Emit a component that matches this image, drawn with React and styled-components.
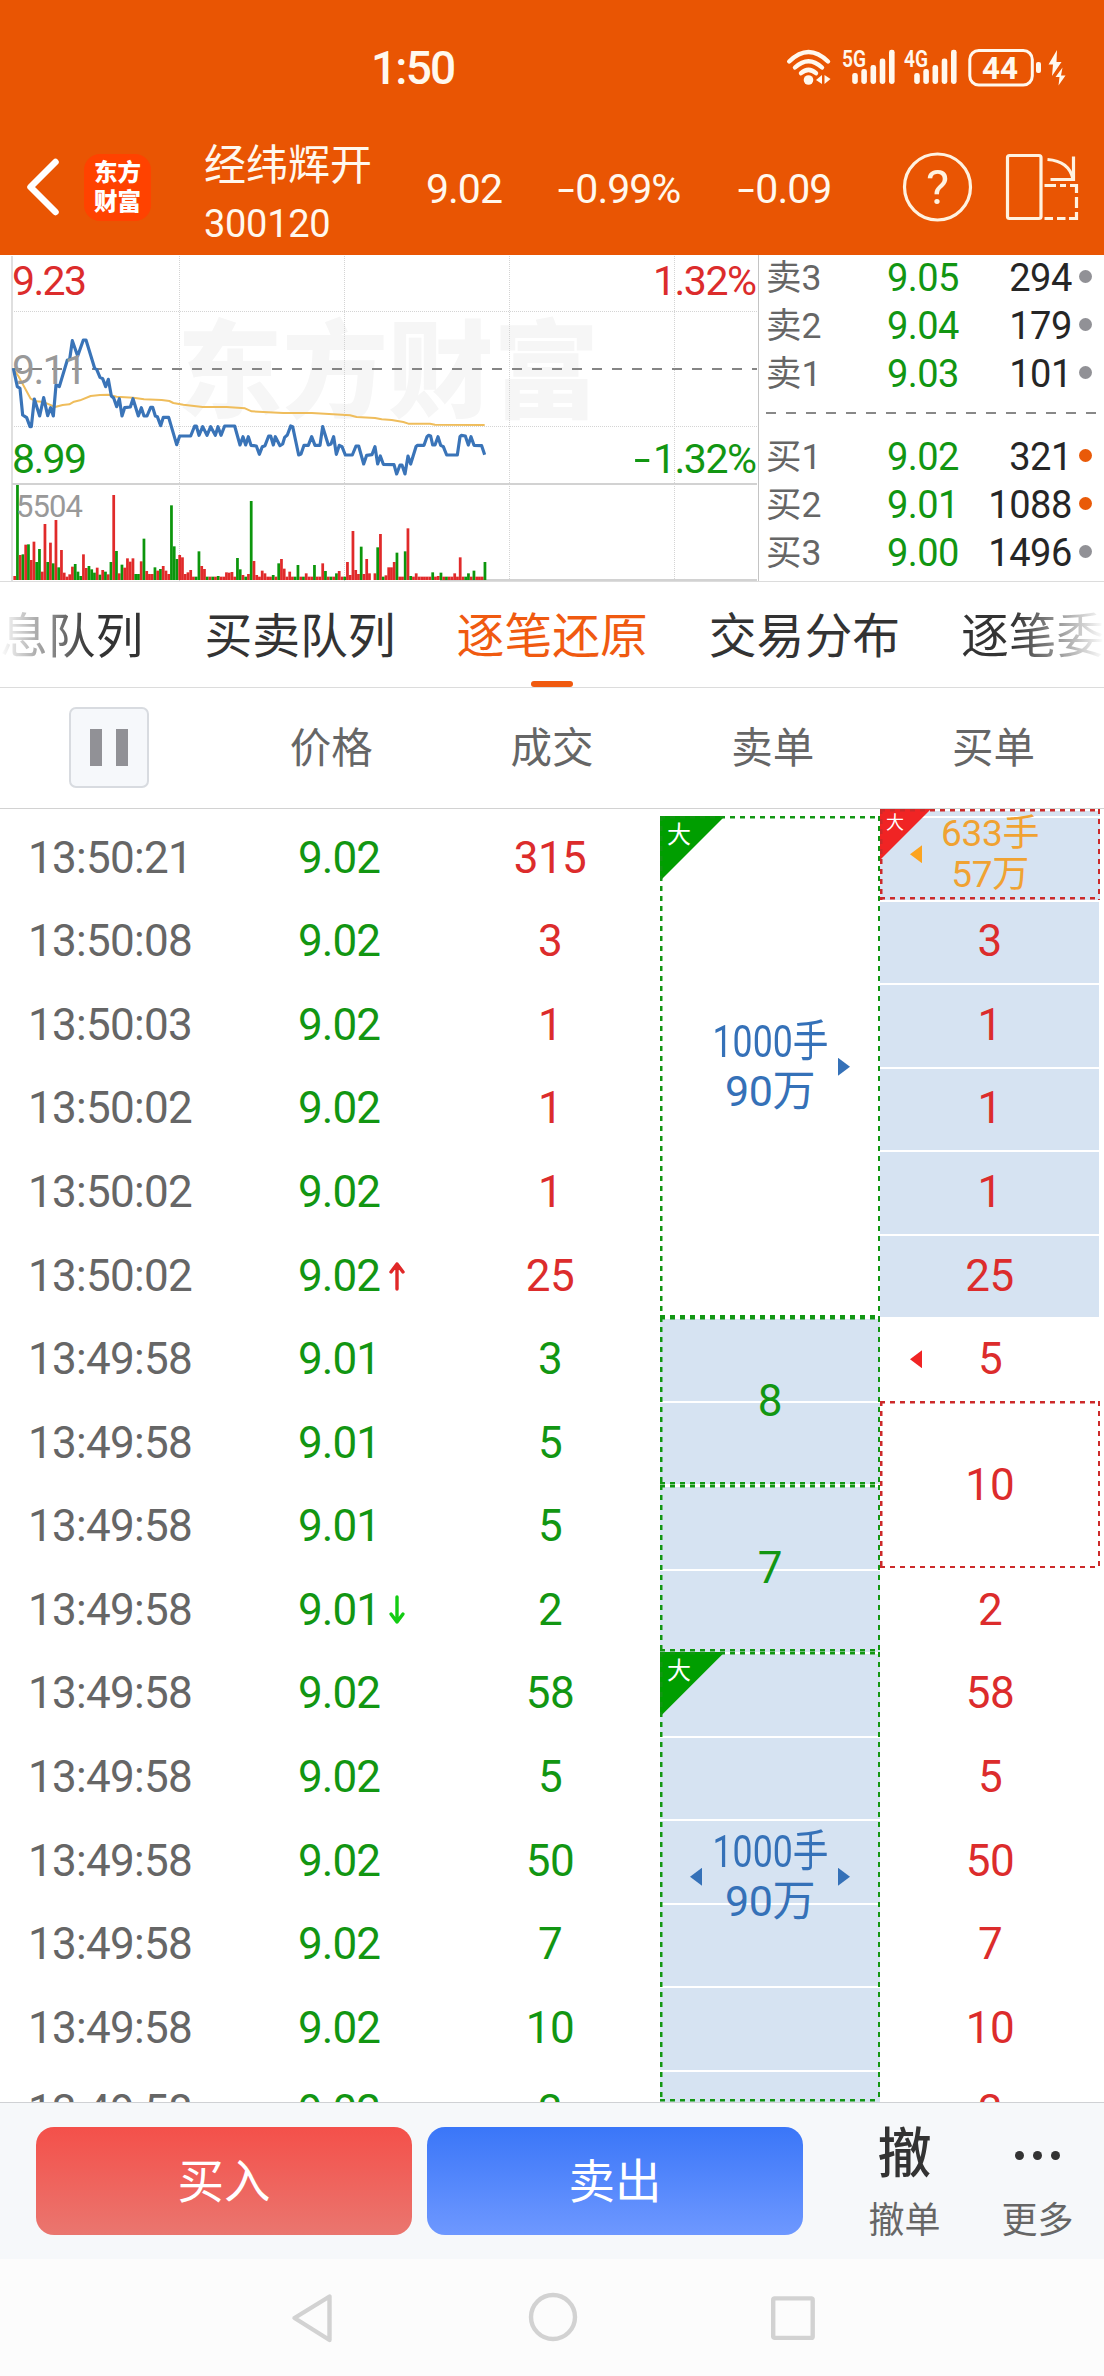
import React from "react";
import styled, { createGlobalStyle, css } from "styled-components";

const GREEN = "#129612";
const RED = "#dc2c2c";
const BLUE = "#3571b8";
const AMBER = "#f0a232";
const FONT = `Roboto, "Noto Sans CJK SC", sans-serif`;

const GlobalStyle = createGlobalStyle`
  *, *::before, *::after { box-sizing: border-box; }
  body { margin: 0; background: #fff; font-family: ${FONT}; color: #333; }
  svg { display: block; flex: none; overflow: visible; }
`;

const Screen = styled.div`
  display: flex;
  flex-direction: column;
  width: 1104px;
  height: 2376px;
  overflow: hidden;
  background: #fff;
  white-space: nowrap;
`;

/* ---------- top area ---------- */

const TopArea = styled.header`
  height: 255px;
  flex: none;
  background: #e95503;
  color: #fff8ee;
`;

const StatusBar = styled.div`
  display: flex;
  align-items: center;
  height: 119px;
  padding: 17px 38px 0 371px;
  justify-content: space-between;
`;

const Clock = styled.div`
  font-size: 46px;
  line-height: 60px;
  font-weight: 500;
  letter-spacing: -1.8px;
`;

const TitleBar = styled.div`
  display: flex;
  align-items: center;
  height: 136px;
  padding-left: 24px;
`;

const Logo = styled.div`
  width: 67px;
  height: 67px;
  margin-left: 22px;
  padding-top: 3px;
  border-radius: 16px;
  background: #ff4200;
  color: #fff;
  font: 900 23.5px/29px "Noto Sans CJK SC", sans-serif;
  text-align: center;
`;

const StockName = styled.div`
  width: 222px;
  margin-left: 53px;
  padding-top: 16px;
`;

const NameLine = styled.div`
  font-size: 42px;
  line-height: 58px;
`;

const CodeLine = styled.div`
  font-size: 38px;
  line-height: 58px;
  letter-spacing: -0.3px;
`;

const Quote = styled.div`
  width: ${(p) => p.$w}px;
  font-size: 41px;
  line-height: 60px;
  letter-spacing: -1px;
  padding-top: 3px;
`;

const Minus = styled.span`
  display: inline-block;
  transform: scaleX(1.5);
  margin: 0 5px 0 3px;
`;

/* ---------- chart and order book ---------- */

const MarketPanel = styled.section`
  display: flex;
  height: 327px;
  flex: none;
  border-bottom: 1px solid #dcdcdc;
`;

const OrderBook = styled.div`
  flex: 1;
  padding: 0 7px 0 7px;
  border-left: 1px solid #c4c4c4;
`;

const BookRow = styled.div`
  display: flex;
  align-items: center;
  height: 48px;
  line-height: 48px;
`;

const BookLabel = styled.div`
  width: 121px;
  color: #666;
  font-size: 35.5px;
`;

const BookPrice = styled.div`
  width: 90px;
  color: ${GREEN};
  letter-spacing: -0.6px;
  font-size: 38px;
`;

const BookVolume = styled.div`
  width: 95px;
  text-align: right;
  color: #262626;
  font-size: 38px;
  letter-spacing: -0.4px;
`;

const BookDot = styled.div`
  width: 13px;
  height: 13px;
  margin: -4px 0 0 7px;
  border-radius: 50%;
  background: ${(p) => (p.$hot ? "#e95a08" : "#919196")};
`;

const BookSide = styled.div`
  margin-top: ${(p) => p.$top}px;
`;

const BookDivider = styled.div`
  height: 2px;
  margin-top: 14px;
  background: repeating-linear-gradient(90deg, #888 0 10px, transparent 10px 20px);
`;

/* ---------- tabs ---------- */

const Tabs = styled.nav`
  display: flex;
  gap: 61px;
  height: 106px;
  flex: none;
  padding-left: 0;
  overflow: hidden;
  border-bottom: 1px solid #dcdcdc;
`;

const Tab = styled.div`
  display: flex;
  flex-direction: column;
  align-items: center;
  flex: none;
  height: 105px;
  color: ${(p) => (p.$active ? "#f05a10" : "#333")};
  font-size: 47.8px;
  line-height: 99px;
  padding-top: 6px;
  ${(p) => p.$fade && css`
    color: transparent;
    background: linear-gradient(${p.$fade}, #ffffff00 0, #333 90px);
    background-clip: text;
    -webkit-background-clip: text;
  `}
`;

const TabMark = styled.div`
  width: 42px;
  height: 6px;
  margin-top: -6px;
  border-radius: 3px;
  background: #f05a10;
`;

/* ---------- tick table ---------- */

const HeadRow = styled.div`
  display: grid;
  grid-template-columns: repeat(5, 1fr);
  align-items: center;
  justify-items: center;
  height: 121px;
  flex: none;
  border-bottom: 1px solid #d2d2d2;
  color: #666;
  font-size: 41.5px;
  line-height: 60px;
`;

const HeadLabel = styled.div`
  padding-top: 2px;
`;

const PauseButton = styled.div`
  display: flex;
  align-items: center;
  justify-content: center;
  gap: 14px;
  width: 80px;
  height: 81px;
  margin: -2px 2px 0 0;
  border: 2px solid #d8dbe0;
  border-radius: 7px;
  background: #f6f8fb;
`;

const PauseBar = styled.div`
  width: 12px;
  height: 37px;
  background: #919196;
`;

const Table = styled.div`
  display: grid;
  grid-template-columns: repeat(5, 220px);
  height: 1293px;
  flex: none;
  overflow: hidden;
`;

const Column = styled.div`
  padding-top: ${(p) => p.$top}px;
`;

const ROW = 83.57;

const Cell = styled.div`
  display: flex;
  align-items: center;
  justify-content: ${(p) => p.$align || "center"};
  height: ${ROW}px;
  padding: ${(p) => p.$pad || 0};
  font-size: 44px;
  letter-spacing: ${(p) => p.$ls || -0.6}px;
  color: ${(p) => p.$color};
  ${(p) => p.$marked && css`
    position: relative;
  `}
`;

const ShadedCell = styled(Cell)`
  width: 219px;
  background: #d6e3f2;
  border-top: 2px solid #fff;
  padding-bottom: 2px;
`;

const dashes = (c) => css`
  background-image:
    repeating-linear-gradient(90deg, ${c} 0 5px, transparent 5px 10px),
    repeating-linear-gradient(90deg, ${c} 0 5px, transparent 5px 10px),
    repeating-linear-gradient(180deg, ${c} 0 5px, transparent 5px 10px),
    repeating-linear-gradient(180deg, ${c} 0 5px, transparent 5px 10px);
  background-size: 100% 2.5px, 100% 2.5px, 2.5px 100%, 2.5px 100%;
  background-position: 0 0, 0 100%, 0 0, 100% 0;
  background-repeat: no-repeat;
`;

const Block = styled.div`
  position: relative;
  display: flex;
  flex-direction: column;
  align-items: center;
  justify-content: center;
  height: ${(p) => p.$h}px;
  color: ${(p) => p.$color};
  font-size: 44px;
  background: ${(p) =>
    p.$shaded
      ? `repeating-linear-gradient(180deg, #fff 0 2px, #d6e3f2 2px ${ROW}px) 0 ${p.$offset || 0}px`
      : "#fff"};
  &::after {
    content: "";
    position: absolute;
    inset: 0;
    ${(p) => dashes(p.$edge)}
  }
`;

const LotLine = styled.div`
  font-size: ${(p) => p.$size}px;
  line-height: ${(p) => p.$lh}px;
  letter-spacing: ${(p) => p.$ls || 0}px;
  transform: scaleX(${(p) => p.$sx || 1});
`;

const Corner = styled.div`
  position: absolute;
  left: 0;
  top: 0;
  width: ${(p) => p.$size}px;
  height: ${(p) => p.$size}px;
  padding: ${(p) => p.$pad};
  background: ${(p) => p.$color};
  clip-path: polygon(0 0, 100% 0, 0 100%);
  color: #fff;
  font-size: ${(p) => p.$font}px;
  line-height: 1;
`;

const Pointer = styled.div`
  position: absolute;
  top: calc(50% - 9px);
  ${(p) => (p.$dir === "left" ? "left: 30px;" : "right: 30px;")}
  width: 12px;
  height: 18px;
  background: ${(p) => p.$color};
  clip-path: ${(p) =>
    p.$dir === "left" ? "polygon(100% 0, 100% 100%, 0 50%)" : "polygon(0 0, 0 100%, 100% 50%)"};
`;

/* ---------- bottom ---------- */

const ActionBar = styled.footer`
  display: flex;
  height: 157px;
  flex: none;
  padding: 24px 0 0 36px;
  border-top: 1px solid #cfd1d4;
  background: #f6f8fa;
`;

const TradeButton = styled.div`
  width: 376px;
  height: 108px;
  margin-right: 15px;
  border-radius: 18px;
  background: ${(p) =>
    p.$buy ? "linear-gradient(#f4504a, #ea766f)" : "linear-gradient(#3a76f8, #6e98ff)"};
  color: #fff;
  font-size: 46.5px;
  line-height: 111px;
  text-align: center;
`;

const Action = styled.div`
  display: flex;
  flex-direction: column;
  align-items: center;
  width: 133px;
  margin-left: ${(p) => p.$ml || 0}px;
`;

const ActionIcon = styled.div`
  display: flex;
  align-items: center;
  gap: 9px;
  height: 56px;
  font-size: 54px;
  line-height: 56px;
  font-weight: 500;
  color: #333;
`;

const Dot = styled.div`
  width: 9px;
  height: 9px;
  border-radius: 50%;
  background: #333;
`;

const ActionLabel = styled.div`
  margin-top: 13px;
  color: #666;
  font-size: 36px;
  line-height: 50px;
`;

const NavBar = styled.div`
  display: flex;
  justify-content: center;
  gap: 193px;
  flex: 1;
  padding: 33px 0 0 1px;
  background: #fcfcfc;
`;

/* ---------- drawings ---------- */

function Signal({ x, label }) {
  return (
    <g transform={`translate(${x} 0)`}>
      <text x="-3" y="18" fontSize="23" fontWeight="600" textLength="24" lengthAdjust="spacingAndGlyphs">
        {label}
      </text>
      {[[7.2, 24], [16.3, 20], [25.5, 16], [34.7, 9.5], [44, 0.8]].map(([bx, y]) => (
        <rect key={bx} x={bx} y={y} width="5.6" height={35 - y} rx="2.4" />
      ))}
    </g>
  );
}

function StatusIcons() {
  return (
    <svg width="281" height="38" viewBox="0 0 281 38" fill="#fff8ee" fontFamily={FONT}>
      <g fill="none" stroke="#fff8ee" strokeWidth="4.4" strokeLinecap="round">
        <path d="M4.2 12.5Q23.5 -6.5 43 12.5" />
        <path d="M10 18.5Q23.5 6 37 18.5" />
        <path d="M16 24.2Q23.5 17.5 31 24.2" />
      </g>
      <circle cx="23.5" cy="31" r="4.8" />
      <path d="M31 31l6-5v9zM39.5 26v9l6-5z" />
      <Signal x={60} label="5G" />
      <Signal x={122} label="4G" />
      <rect x="184.8" y="1.5" width="62.5" height="34.5" rx="9" fill="none" stroke="#fff8ee" strokeWidth="3" />
      <text x="197" y="30" fontSize="32" fontWeight="700" textLength="36" lengthAdjust="spacingAndGlyphs">44</text>
      <rect x="251" y="13" width="5" height="11" rx="2" />
      <path d="M272 1L263.5 15.5H268L267 27L276.5 13H271.5ZM277.5 18.5L270.5 28H274.5L273.5 36.5L280.5 26.5H276Z" />
    </svg>
  );
}

function BackIcon() {
  return (
    <svg width="38" height="60" fill="none" stroke="#fff" strokeWidth="6.5" strokeLinecap="round" strokeLinejoin="round">
      <path d="M31.5 5L6.5 30L31.5 55" />
    </svg>
  );
}

function HeaderTools() {
  return (
    <svg width="180" height="70" viewBox="0 0 180 70" fill="none" stroke="#fff2e0" strokeWidth="3.2">
      <circle cx="36.5" cy="35" r="33" />
      <text x="36.5" y="52" fontSize="49" fontFamily="Roboto" fontWeight="400" textAnchor="middle" fill="#fff2e0" stroke="none">?</text>
      <rect x="106.5" y="3.5" width="33.5" height="63" rx="2" />
      <path d="M146.5 7.5Q168 9 172 27M172.5 4.5V27.5H149.5" />
      <path d="M143.5 33.5H155M159 33.5H165M169 33.5H175.5V41M175.5 45V56M175.5 60V66.5H168M143.5 66.5H152M156 66.5H164.5" />
    </svg>
  );
}

const PRICE_LINE =
  "40,355 52,410 60,415 68,495 80,503 90,530 94,530 103,447 119,498 131,443 143,497 152,473 160,498 168,405 178,410 202,330 209,328 217,272 233,318 250,270 258,270 284,355 290,358 300,382 308,386 317,410 325,388 334,438 341,444 350,470 358,446 366,498 374,473 391,471 399,446 415,498 424,473 432,498 441,498 452,472 458,472 466,498 472,500 482,527 490,502 506,502 530,584 539,558 572,558 584,528 589,528 597,556 608,530 621,556 632,530 646,556 654,530 663,556 674,528 704,528 720,585 729,560 737,585 745,560 753,586 769,588 778,613 787,590 795,587 806,558 812,558 820,585 826,560 840,587 848,582 854,562 862,555 872,528 878,530 896,615 903,612 912,586 925,586 935,560 945,586 960,586 968,530 985,585 993,582 1001,560 1009,613 1018,586 1026,590 1036,615 1057,615 1068,588 1076,588 1091,642 1100,616 1116,614 1125,590 1133,642 1141,618 1150,643 1182,644 1190,672 1200,645 1206,645 1215,672 1224,618 1232,642 1248,590 1252,586 1272,586 1281,560 1286,556 1292,558 1298,585 1305,585 1314,560 1322,586 1330,590 1340,615 1372,615 1380,560 1384,556 1396,558 1405,585 1413,560 1422,586 1445,587 1454,614";
const AVERAGE_LINE =
  "40,357 55,378 92,446 108,454 125,455 140,460 165,471 188,465 208,463 222,455 240,451 272,438 300,435 325,434 350,440 400,443 432,448 485,450 508,453 520,459 550,464 608,471 680,471 735,475 755,484 790,486 850,489 935,489 1000,493 1050,496 1070,501 1125,504 1145,508 1175,510 1210,516 1225,521 1290,521 1305,524 1454,525";
const VOLUMES =
  "12r 285g 75r 77g 106r 107g 60r 115r 54g 93g 25r 168r 54g 112r 50g 180r 38g 90r 22r 10r 17r 40r 48g 25g 12g 77r 36r 42g 32g 22g 37r 16g 30r 25g 17r 54g 255r 87g 20r 46g 37r 65r 55r 65r 18g 18g 56r 124g 27r 18r 18r 38g 28r 33g 42r 28r 18r 224g 101g 63g 75r 68r 18r 23r 30r 10r 10g 86g 42r 33r 10g 10r 10g 10r 12g 10r 10r 23r 22r 24r 10r 66g 32g 15r 10g 18r 237g 57r 15r 10r 28r 20r 10r 10r 15g 10r 50g 63r 34r 10r 25r 10r 10g 45g 10r 10g 20r 10r 10r 45g 10r 10r 50r 27g 10r 10g 10r 20g 27r 10r 10g 54r 15r 147r 30r 18r 100g 18r 63r 20r 0r 20r 98g 138r 10g 14r 38r 38r 54r 82g 10r 10r 86g 155r 12g 10r 20r 10r 10r 10r 10r 10r 23g 10r 12r 22g 10r 10g 10r 10r 20r 10r 68r 10r 10g 20g 10r 28g 10r 10r 10r 54g".split(" ");

function TrendChart() {
  return (
    <svg width="758" height="326" viewBox="0 255 758 326" fontFamily={FONT}>
      <text x="177" y="409" fontSize="106" fontWeight="900" fill="#f6f6f6" textLength="422" lengthAdjust="spacingAndGlyphs">
        东方财富
      </text>
      <g stroke="#d4d4d4" strokeWidth="1" strokeDasharray="1 1">
        {[179.5, 344.5, 509.5, 674.5].map((x) => (
          <path key={x} d={`M${x} 256V581`} />
        ))}
        <path d="M12 311.5H757M12 426.5H757" />
      </g>
      <path d="M12 256V581" stroke="#dfdfdf" strokeWidth="2" />
      <path d="M12 484H757M440 580H757" stroke="#d2d2d2" strokeWidth="2" />
      <path d="M12 369H757" stroke="#858585" strokeWidth="2" strokeDasharray="10 10" />
      <g transform="translate(0 250) scale(0.33333)" fill="none" strokeLinejoin="round">
        <polyline points={AVERAGE_LINE} stroke="#efbd5c" strokeWidth="6" />
        <polyline points={PRICE_LINE} stroke="#3a74b8" strokeWidth="9.5" />
        {VOLUMES.map((v, i) => {
          const h = parseInt(v, 10);
          return (
            <rect
              key={i}
              x={40 + i * 8.25}
              y={990 - h}
              width="8.25"
              height={h}
              fill={v.endsWith("g") ? "#0c960c" : "#e02a2a"}
            />
          );
        })}
      </g>
      <g fontSize="41">
        <text x="12" y="295" fill={RED} textLength="75">9.23</text>
        <text x="12" y="384" fill="#999" textLength="75">9.11</text>
        <text x="12" y="473" fill={GREEN} textLength="75">8.99</text>
        <text x="653" y="295" fill={RED} textLength="104">1.32%</text>
        <text x="653" y="473" fill={GREEN} textLength="104">1.32%</text>
        <text transform="translate(634 473) scale(1.45 1)" fill={GREEN}>-</text>
        <text x="16" y="517" fontSize="31" fill="#999" textLength="67">5504</text>
      </g>
    </svg>
  );
}

const ArrowBox = styled.span`
  padding-left: 9px;
`;

function Arrow({ up }) {
  return (
    <ArrowBox>
      <svg width="16" height="30" fill="none" stroke={up ? "#e02828" : "#12cc12"} strokeWidth="3.4" strokeLinecap="round" strokeLinejoin="round">
        <path d={up ? "M8 28V3M2 11L8 3L14 11" : "M8 2V27M2 19L8 27L14 19"} />
      </svg>
    </ArrowBox>
  );
}

function NavIcon({ kind }) {
  return (
    <svg width={kind === "home" ? 50 : 45} height="52" fill="none" stroke="#d2d2d2" strokeWidth="4.4" strokeLinejoin="round">
      {kind === "back" && <path d="M39.5 4.5V48L4.5 26Z" />}
      {kind === "home" && <circle cx="25" cy="25" r="22" />}
      {kind === "recent" && <rect x="2.2" y="6.4" width="39.5" height="39.5" rx="1.5" />}
    </svg>
  );
}

/* ---------- data ---------- */

const SELLS = [["卖3", "9.05", "294"], ["卖2", "9.04", "179"], ["卖1", "9.03", "101"]];
const BUYS = [["买1", "9.02", "321", true], ["买2", "9.01", "1088", true], ["买3", "9.00", "1496"]];

const TICKS = [
  ["13:50:21", "9.02", "315", RED],
  ["13:50:08", "9.02", "3", RED],
  ["13:50:03", "9.02", "1", RED],
  ["13:50:02", "9.02", "1", RED],
  ["13:50:02", "9.02", "1", RED],
  ["13:50:02", "9.02", "25", RED, "up"],
  ["13:49:58", "9.01", "3", GREEN],
  ["13:49:58", "9.01", "5", GREEN],
  ["13:49:58", "9.01", "5", GREEN],
  ["13:49:58", "9.01", "2", GREEN, "down"],
  ["13:49:58", "9.02", "58", GREEN],
  ["13:49:58", "9.02", "5", GREEN],
  ["13:49:58", "9.02", "50", GREEN],
  ["13:49:58", "9.02", "7", GREEN],
  ["13:49:58", "9.02", "10", GREEN],
  ["13:49:58", "9.02", "3", GREEN],
];

function BookRows({ rows }) {
  return rows.map(([label, price, volume, hot]) => (
    <BookRow key={label}>
      <BookLabel>{label}</BookLabel>
      <BookPrice>{price}</BookPrice>
      <BookVolume>{volume}</BookVolume>
      <BookDot $hot={hot} />
    </BookRow>
  ));
}

function BigLot() {
  return (
    <>
      <LotLine $size={44} $lh={49} $sx={0.81}>1000手</LotLine>
      <LotLine $size={43} $lh={49} $ls={-0.5}>90万</LotLine>
    </>
  );
}

export default function App() {
  return (
    <Screen>
      <GlobalStyle />
      <TopArea>
        <StatusBar>
          <Clock>1:50</Clock>
          <StatusIcons />
        </StatusBar>
        <TitleBar>
          <BackIcon />
          <Logo>东方<br />财富</Logo>
          <StockName>
            <NameLine>经纬辉开</NameLine>
            <CodeLine>300120</CodeLine>
          </StockName>
          <Quote $w={131}>9.02</Quote>
          <Quote $w={180}><Minus>-</Minus>0.99%</Quote>
          <Quote $w={164}><Minus>-</Minus>0.09</Quote>
          <HeaderTools />
        </TitleBar>
      </TopArea>

      <MarketPanel>
        <TrendChart />
        <OrderBook>
          <BookSide $top={-1}><BookRows rows={SELLS} /></BookSide>
          <BookDivider />
          <BookSide $top={19}><BookRows rows={BUYS} /></BookSide>
        </OrderBook>
      </MarketPanel>

      <Tabs>
        <Tab $fade="90deg">息队列</Tab>
        <Tab>买卖队列</Tab>
        <Tab $active>逐笔还原<TabMark /></Tab>
        <Tab>交易分布</Tab>
        <Tab $fade="270deg">逐笔委</Tab>
      </Tabs>

      <HeadRow>
        <PauseButton><PauseBar /><PauseBar /></PauseButton>
        <HeadLabel>价格</HeadLabel>
        <HeadLabel>成交</HeadLabel>
        <HeadLabel>卖单</HeadLabel>
        <HeadLabel>买单</HeadLabel>
      </HeadRow>

      <Table>
        <Column $top={7}>
          {TICKS.map((t, i) => (
            <Cell key={i} $align="flex-start" $pad="0 0 0 28px" $ls={-0.7} $color="#666">{t[0]}</Cell>
          ))}
        </Column>
        <Column $top={7}>
          {TICKS.map((t, i) => (
            <Cell key={i} $align="flex-start" $pad="0 0 0 78px" $ls={-0.9} $color={GREEN}>
              {t[1]}
              {t[4] && <Arrow up={t[4] === "up"} />}
            </Cell>
          ))}
        </Column>
        <Column $top={7}>
          {TICKS.map((t, i) => (
            <Cell key={i} $color={t[3]}>{t[2]}</Cell>
          ))}
        </Column>
        <Column $top={7}>
          <Block $h={ROW * 6} $color={BLUE} $edge={GREEN}>
            <Corner $size={65} $color="#009e00" $font={24} $pad="7px 0 0 7px">大</Corner>
            <BigLot />
            <Pointer $dir="right" $color={BLUE} />
          </Block>
          <Block $h={ROW * 2} $color={GREEN} $edge={GREEN} $shaded>8</Block>
          <Block $h={ROW * 2} $color={GREEN} $edge={GREEN} $shaded>7</Block>
          <Block $h={450} $color={BLUE} $edge={GREEN} $shaded>
            <Corner $size={65} $color="#009e00" $font={24} $pad="7px 0 0 7px">大</Corner>
            <Pointer $dir="left" $color={BLUE} />
            <BigLot />
            <Pointer $dir="right" $color={BLUE} />
          </Block>
        </Column>
        <Column $top={0}>
          <Block $h={7 + ROW} $color={AMBER} $edge="#cc2a2a" $shaded $offset={7}>
            <Corner $size={51} $color="#f02424" $font={18} $pad="5px 0 0 6px">大</Corner>
            <Pointer $dir="left" $color="#fca420" />
            <LotLine $size={37} $lh={41} $ls={-0.3}>633手</LotLine>
            <LotLine $size={37} $lh={41} $ls={-0.3}>57万</LotLine>
          </Block>
          {["3", "1", "1", "1", "25"].map((v, i) => (
            <ShadedCell key={i} $color={RED}>{v}</ShadedCell>
          ))}
          <Cell $color={RED} $marked><Pointer $dir="left" $color="#f02424" />5</Cell>
          <Block $h={ROW * 2} $color={RED} $edge="#cc2a2a">10</Block>
          {["2", "58", "5", "50", "7", "10", "3"].map((v, i) => (
            <Cell key={i} $color={RED}>{v}</Cell>
          ))}
        </Column>
      </Table>

      <ActionBar>
        <TradeButton $buy>买入</TradeButton>
        <TradeButton>卖出</TradeButton>
        <Action $ml={20}>
          <ActionIcon>撤</ActionIcon>
          <ActionLabel>撤单</ActionLabel>
        </Action>
        <Action>
          <ActionIcon><Dot /><Dot /><Dot /></ActionIcon>
          <ActionLabel>更多</ActionLabel>
        </Action>
      </ActionBar>

      <NavBar>
        <NavIcon kind="back" />
        <NavIcon kind="home" />
        <NavIcon kind="recent" />
      </NavBar>
    </Screen>
  );
}
